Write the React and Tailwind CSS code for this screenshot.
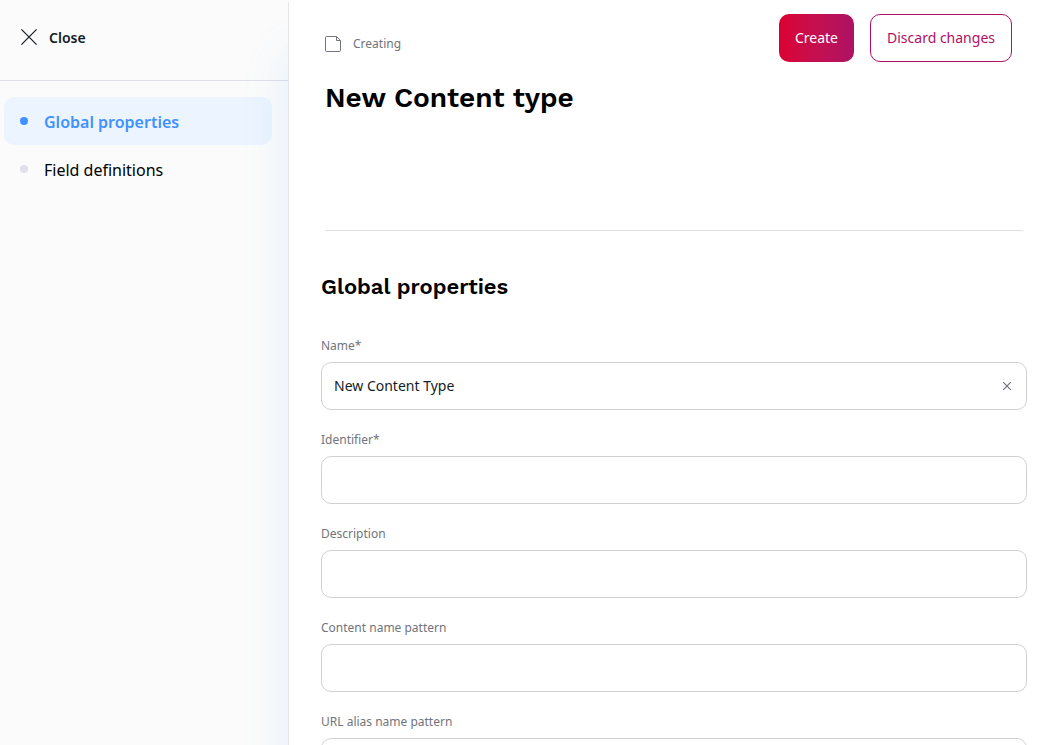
import React from "react";

const fields = [
  { id: "name", label: "Name*", value: "New Content Type", clearable: true },
  { id: "identifier", label: "Identifier*", value: "" },
  { id: "description", label: "Description", value: "" },
  { id: "name-pattern", label: "Content name pattern", value: "" },
  { id: "url-pattern", label: "URL alias name pattern", value: "" },
];

function CrossIcon({ className }) {
  return (
    <svg className={className} viewBox="0 0 16 16" fill="none" stroke="currentColor" aria-hidden="true">
      <path d="M0.4 0.4 15.6 15.6M15.6 0.4 0.4 15.6" vectorEffect="non-scaling-stroke" strokeWidth="1.2" />
    </svg>
  );
}

function FileIcon() {
  return (
    <svg className="size-4" viewBox="0 0 16 16" fill="none" stroke="currentColor" strokeLinejoin="round" aria-hidden="true">
      <path d="M11.5 0.5H1.8Q0.5 0.5 0.5 1.8V14.2Q0.5 15.5 1.8 15.5H14.2Q15.5 15.5 15.5 14.2V4.5Z" />
      <path d="M11.5 0.5V4.5H15.5" />
    </svg>
  );
}

function Field({ field }) {
  const [value, setValue] = React.useState(field.value);
  return (
    <div className="flex flex-col gap-1.5">
      <label htmlFor={field.id} className="text-xs leading-5 text-[#71747c]">
        {field.label}
      </label>
      <div className="flex h-12 items-center rounded-[10px] border border-[#d1d1d3] bg-white pl-3 pr-[15px]">
        <input
          id={field.id}
          type="text"
          value={value}
          onChange={(e) => setValue(e.target.value)}
          className="h-full min-w-0 flex-1 bg-transparent pb-0.5 text-sm text-[#131c26] outline-none"
        />
        {field.clearable && (
          <button type="button" aria-label="Clear" onClick={() => setValue("")} className="text-[#71747c]">
            <CrossIcon className="size-2" />
          </button>
        )}
      </div>
    </div>
  );
}

export default function App() {
  return (
    <div className="flex h-screen overflow-hidden bg-white font-['Noto_Sans',sans-serif]">
      <aside className="w-72 shrink-0 bg-[#fbfbfb]">
        <div className="flex h-[81px] border-b border-[#dfdfe9] px-[21px] pt-[26px]">
          <button type="button" className="flex h-[22px] items-center gap-3 text-sm font-semibold text-[#131c26]">
            <CrossIcon className="size-4" />
            <span className="pt-0.5">Close</span>
          </button>
        </div>
        <nav className="flex flex-col pl-1 pr-4 pt-4">
          <a href="#global" className="flex h-12 items-center gap-4 rounded-[10px] bg-[#ecf4ff] px-4 font-semibold text-[#4191ff]">
            <span className="size-2 rounded-full bg-[#4191ff]" />
            <span className="pt-0.5">Global properties</span>
          </a>
          <a href="#fields" className="flex h-12 items-center gap-4 px-4 text-black">
            <span className="size-2 rounded-full bg-[#e0e0e8]" />
            <span className="pt-0.5">Field definitions</span>
          </a>
        </nav>
      </aside>
      <main className="relative min-w-0 flex-1 overflow-y-auto rounded-tl border-l border-[#e4e6ef] bg-white pl-8 pr-[22px] shadow-[0_54px_48px_0_rgba(65,160,245,0.14)] [scrollbar-width:none]">
        <header className="mx-1 flex h-[231px] flex-col border-b border-[#dfdfe5] pt-3.5">
          <div className="flex items-start justify-between pr-[11px]">
            <div className="flex items-center gap-3 pt-5 text-xs leading-5 text-[#71747c]">
              <FileIcon />
              Creating
            </div>
            <div className="flex gap-4">
              <button type="button" className="h-12 rounded-[10px] bg-linear-to-r from-[#db0032] to-[#ae1164] px-4 text-sm text-white">
                Create
              </button>
              <button type="button" className="h-12 rounded-[10px] border border-[#ae1164] bg-white px-4 text-sm text-[#ae1164]">
                Discard changes
              </button>
            </div>
          </div>
          <h1 className="mt-[18px] font-['Work_Sans','Inter',sans-serif] text-[28px] font-semibold leading-9 text-black">
            New Content type
          </h1>
        </header>
        <section id="global" className="pb-8 pt-10">
          <h2 className="font-['Work_Sans','Inter',sans-serif] text-[22px] font-semibold leading-8 text-black">
            Global properties
          </h2>
          <form className="mt-[33px] flex flex-col gap-5">
            {fields.map((field) => (
              <Field key={field.id} field={field} />
            ))}
          </form>
        </section>
      </main>
    </div>
  );
}
